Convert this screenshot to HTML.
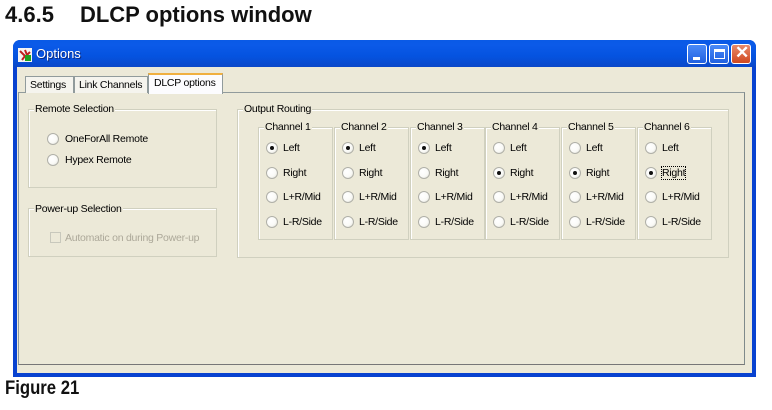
<!DOCTYPE html>
<html><head><meta charset="utf-8"><style>
*{margin:0;padding:0;box-sizing:border-box}
body{width:772px;height:410px;background:#fff;position:relative;overflow:hidden;font-family:"Liberation Sans",sans-serif;}
.a{position:absolute}
.h{left:5px;top:2px;font-size:22px;font-weight:bold;color:#111;white-space:nowrap}
.fig{left:5px;top:378px;font-size:19px;color:#111;font-weight:bold;transform:scaleX(0.88);transform-origin:left}
.win{left:13px;top:40px;width:743px;height:337px;background:#0842d0;border-radius:7px 7px 0 0}
.tb{left:13px;top:40px;width:743px;height:27px;border-radius:7px 7px 0 0;background:linear-gradient(#0a5ae6,#0b5ae8 20%,#0553e0 60%,#0a48c8)}
.body{left:17px;top:67px;width:735px;height:306px;background:#ece9d8}
.t{font-size:10.5px;letter-spacing:-0.25px;color:#000;white-space:nowrap}
.grp{border:1px solid #d0d0bf;box-shadow:inset 1px 1px 0 #fff}
.lg{background:#ece9d8;padding:0 1px;font-size:10.5px;letter-spacing:-0.25px;line-height:12px;white-space:nowrap}
.rb{width:12px;height:12px;border-radius:50%;background:radial-gradient(circle at 35% 35%,#fff,#fafaf7 55%,#dcdcd4);border:1px solid #b0b0a8}
.rb.on::after{content:"";position:absolute;left:3px;top:3px;width:4px;height:4px;border-radius:50%;background:#111}
.btn{width:20px;height:20px;border:1px solid #fff;border-radius:3px;background:linear-gradient(#4a8af8,#2060e0)}
</style></head><body>
<div class="a h">4.6.5<span style="display:inline-block;width:26px"></span>DLCP options window</div>
<div class="a win"></div>
<div class="a tb"></div>
<svg class="a" style="left:18px;top:48px" width="14" height="14"><rect x="0" y="0" width="14" height="14" fill="#f4f4f4"/><path d="M2 3 L7 8 L4 12 M7 2 L9 7 L12 4" stroke="#c02020" stroke-width="2" fill="none"/><rect x="7" y="7" width="6" height="6" fill="#20a020"/></svg>
<div class="a t" style="left:36px;top:46px;font-size:13px;letter-spacing:0;color:#fff;text-shadow:1px 1px 0 #0a2a80">Options</div>
<div class="a btn" style="left:687px;top:44px"><div class="a" style="left:5px;top:12px;width:7px;height:3px;background:#fff"></div></div>
<div class="a btn" style="left:709px;top:44px"><div class="a" style="left:4px;top:4px;width:11px;height:10px;border:1px solid #fff;border-top-width:3px"></div></div>
<div class="a btn" style="left:731px;top:44px;background:linear-gradient(#e88a6a,#d04820)"><div class="a" style="left:3px;top:-2px;color:#fff;font-size:17px;font-weight:bold">✕</div></div>
<div class="a body"></div>
<div class="a" style="left:18px;top:92px;width:727px;height:273px;border:1px solid #919b9c;border-right-color:#7f8a8b;border-bottom-color:#777"></div>
<div class="a" style="left:25px;top:76px;width:49px;height:17px;border:1px solid #919b9c;border-bottom:none;background:#f5f4ee"></div>
<div class="a t" style="left:30px;top:79px">Settings</div>
<div class="a" style="left:74px;top:76px;width:74px;height:17px;border:1px solid #919b9c;border-bottom:none;background:#f5f4ee"></div>
<div class="a t" style="left:79px;top:79px">Link Channels</div>
<div class="a" style="left:148px;top:73px;width:75px;height:21px;border:1px solid #919b9c;border-bottom:none;background:#fcfcfe;border-top:2px solid #f0b040"></div>
<div class="a t" style="left:154px;top:77px">DLCP options</div>
<div class="a grp" style="left:28px;top:109px;width:189px;height:79px"></div>
<div class="a lg" style="left:34px;top:103px">Remote Selection</div>
<div class="a rb" style="left:47px;top:133px"></div><div class="a t" style="left:65px;top:133px">OneForAll Remote</div>
<div class="a rb" style="left:47px;top:154px"></div><div class="a t" style="left:65px;top:154px">Hypex Remote</div>
<div class="a grp" style="left:28px;top:208px;width:189px;height:49px"></div>
<div class="a lg" style="left:34px;top:203px">Power-up Selection</div>
<div class="a" style="left:50px;top:232px;width:11px;height:11px;border:1px solid #c8c8bc"></div>
<div class="a t" style="left:65px;top:232px;color:#aca899">Automatic on during Power-up</div>
<div class="a grp" style="left:237px;top:109px;width:492px;height:149px"></div>
<div class="a lg" style="left:243px;top:103px">Output Routing</div>
<div id="ch"></div>
<script>
var xs=[258,334,410,485,561,637],sel=[0,0,0,1,1,1],lab=["Left","Right","L+R/Mid","L-R/Side"],h="";
for(var i=0;i<6;i++){var x=xs[i];
h+='<div class="a grp" style="left:'+x+'px;top:127px;width:75px;height:113px"></div>';
h+='<div class="a lg" style="left:'+(x+6)+'px;top:121px">Channel '+(i+1)+'</div>';
for(var r=0;r<4;r++){var y=142+r*24.7;
h+='<div class="a rb'+(sel[i]==r?' on':'')+'" style="left:'+(x+8)+'px;top:'+y+'px"></div>';
h+='<div class="a t" style="left:'+(x+25)+'px;top:'+(y)+'px;'+(i==5&&r==1?'outline:1px dotted #000;outline-offset:0':'')+'">'+lab[r]+'</div>';}}
document.getElementById('ch').innerHTML=h;
</script>
<div class="a fig">Figure 21</div>
</body></html>
